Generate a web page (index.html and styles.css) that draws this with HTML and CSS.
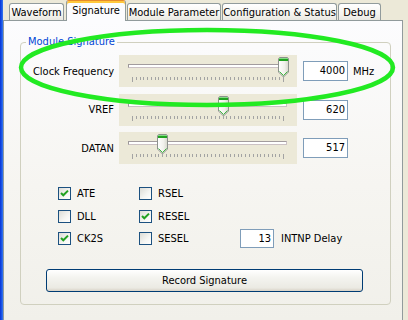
FILE: index.html
```html
<!DOCTYPE html>
<html>
<head>
<meta charset="utf-8">
<link rel="stylesheet" href="styles.css">
</head>
<body>
<svg class="defs" aria-hidden="true">
  <defs>
    <linearGradient id="thumbfill" x1="0" x2="1" y1="0" y2="0">
      <stop offset="0" stop-color="#ffffff"/>
      <stop offset="0.6" stop-color="#f1f1ec"/>
      <stop offset="1" stop-color="#d6d6cc"/>
    </linearGradient>
    <symbol id="thumb" viewBox="0 0 11 21">
      <path d="M1.5,0.5 H9.5 L10.5,1.5 V15 L5.5,20 L0.5,15 V1.5 Z" fill="url(#thumbfill)" stroke="#8c918c"/>
      <rect x="1" y="1" width="9" height="3" fill="#21a221"/>
      <rect x="1" y="1" width="9" height="1" fill="#86dc86"/>
      <path d="M1.5,14.5 L5.5,18.5 L9.5,14.5" fill="none" stroke="#41b841"/>
    </symbol>
    <symbol id="check" viewBox="0 0 11 11">
      <path d="M2,5 L4.3,7.3 L9,2.6" fill="none" stroke="#21a121" stroke-width="2"/>
    </symbol>
  </defs>
</svg>
<div class="window">
  <div class="frame-edge"></div>
  <div class="main">
    <div class="tabs">
      <div class="tab w-wave">Waveform</div>
      <div class="tab tab-active w-sig">Signature</div>
      <div class="tab w-mod">Module Parameter</div>
      <div class="tab w-conf">Configuration &amp; Status</div>
      <div class="tab w-dbg">Debug</div>
    </div>
    <div class="panel">
      <fieldset class="group">
        <legend>Module Signature</legend>
        <div class="sliders">
          <div class="srow">
            <span class="slabel">Clock Frequency</span>
            <div class="trackbar" style="--v:1">
              <div class="channel"></div>
              <div class="ticks"></div>
              <svg class="thumb"><use href="#thumb"/></svg>
            </div>
            <div class="edit">4000</div>
            <span class="unit">MHz</span>
          </div>
          <div class="srow">
            <span class="slabel">VREF</span>
            <div class="trackbar" style="--v:0.6">
              <div class="channel"></div>
              <div class="ticks"></div>
              <svg class="thumb"><use href="#thumb"/></svg>
            </div>
            <div class="edit">620</div>
          </div>
          <div class="srow">
            <span class="slabel">DATAN</span>
            <div class="trackbar" style="--v:0.2">
              <div class="channel"></div>
              <div class="ticks"></div>
              <svg class="thumb"><use href="#thumb"/></svg>
            </div>
            <div class="edit">517</div>
          </div>
        </div>
        <div class="checks">
          <div class="cb c1"><span class="box"><svg class="tick"><use href="#check"/></svg></span>ATE</div>
          <div class="cb c2"><span class="box"></span>RSEL</div>
          <div class="cb c1"><span class="box"></span>DLL</div>
          <div class="cb c2"><span class="box"><svg class="tick"><use href="#check"/></svg></span>RESEL</div>
          <div class="cb c1"><span class="box"><svg class="tick"><use href="#check"/></svg></span>CK2S</div>
          <div class="cb c2"><span class="box"></span>SESEL</div>
          <div class="delay c3"><div class="edit small">13</div>INTNP Delay</div>
        </div>
        <button class="btn">Record Signature</button>
      </fieldset>
    </div>
  </div>
</div>
<svg class="annot" width="408" height="320" viewBox="0 0 408 320">
  <ellipse cx="207" cy="67.5" rx="186" ry="37.5" fill="none" stroke="#22ea22" stroke-width="4.5"/>
</svg>
</body>
</html>
```

FILE: styles.css
```css
html, body {
  margin: 0;
  padding: 0;
}
body {
  background: #ece9d8;
  font-family: "DejaVu Sans Condensed", "Liberation Sans", sans-serif;
  font-size: 11px;
  color: #000;
  width: 408px;
  height: 320px;
  overflow: hidden;
}
.defs {
  position: absolute;
  width: 0;
  height: 0;
  overflow: hidden;
}
.window {
  display: flex;
  width: 408px;
  height: 320px;
  overflow: hidden;
}
.frame-edge {
  flex: none;
  width: 3px;
  background: linear-gradient(to right, #0831d9, #1b5ae6 60%, #3b78ef);
}
.main {
  flex: 1;
  display: flex;
  flex-direction: column;
}
.tabs {
  display: flex;
  align-items: flex-end;
  gap: 1px;
  height: 20px;
  padding-left: 6px;
  flex: none;
}
.tab {
  box-sizing: border-box;
  height: 17px;
  border: 1px solid #919b9c;
  border-bottom: none;
  border-radius: 3px 3px 0 0;
  background: linear-gradient(#ffffff, #f6f5f1 60%, #e9e8e1);
  display: flex;
  align-items: center;
  justify-content: center;
  white-space: nowrap;
}
.tab-active {
  height: 21px;
  margin-bottom: -1px;
  position: relative;
  z-index: 1;
  border-top: 1px solid #e68b2c;
  box-shadow: inset 0 2px 0 #ffc83c;
  background: #fcfcfe;
  padding-bottom: 2px;
}
.w-wave { width: 55px; }
.w-sig { width: 60px; margin-left: 1px; }
.w-mod { width: 94px; }
.w-conf { width: 115px; }
.w-dbg { width: 43px; }
.panel {
  flex: 1;
  box-sizing: border-box;
  width: 400px;
  border: 1px solid #919b9c;
  border-bottom: none;
  background: linear-gradient(#fcfcfe, #f6f5f1 55%, #f1f0ea);
}
.group {
  margin: 14px 0 0 16px;
  padding: 0 0 12px 0;
  width: 371px;
  box-sizing: border-box;
  border: 1px solid #d0d0bf;
  border-radius: 4px;
  min-inline-size: 0;
}
.group legend {
  margin-left: 5px;
  padding: 0 2px;
  line-height: 14px;
  color: #0046d5;
}
.sliders {
  display: flex;
  flex-direction: column;
  gap: 6.5px;
  padding-top: 6px;
}
.srow {
  display: flex;
  align-items: center;
  height: 32px;
}
.slabel {
  width: 93px;
  margin-right: 5px;
  text-align: right;
  white-space: nowrap;
}
.trackbar {
  position: relative;
  flex: none;
  width: 178px;
  height: 32px;
  margin-right: 6px;
  background: #ece9d8;
  overflow: hidden;
}
.channel {
  box-sizing: border-box;
  height: 4px;
  margin: 9px 10px 0 9px;
  border: 1px solid #cbc1c4;
  border-top-color: #a29c9e;
  border-left-color: #9c9899;
  background: #ffffff;
}
.ticks {
  margin: 9px 0 0 13px;
  width: 152px;
  height: 5px;
  background:
    linear-gradient(to right, #a3a3a3 0 1px, transparent 1px calc(100% - 1px), #a3a3a3 calc(100% - 1px)),
    repeating-linear-gradient(to right, #a3a3a3 0 1px, transparent 1px 3.775px) 0 0 / 100% 3px no-repeat;
}
.thumb {
  position: absolute;
  top: 2px;
  left: calc(8px + var(--v) * 151px);
  width: 11px;
  height: 21px;
}
.edit {
  flex: none;
  box-sizing: border-box;
  width: 45px;
  height: 20px;
  border: 1px solid #7f9db9;
  background: #ffffff;
  text-align: right;
  padding-right: 2px;
  line-height: 18px;
  margin-right: 5px;
}
.unit {
  white-space: nowrap;
}
.checks {
  display: grid;
  grid-template-columns: 81px 101px auto;
  grid-template-rows: repeat(3, 13px);
  row-gap: 9.5px;
  margin: 23px 0 0 37px;
}
.c1 { grid-column: 1; }
.c2 { grid-column: 2; }
.c3 { grid-column: 3; }
.cb {
  display: flex;
  align-items: center;
  gap: 6px;
  height: 13px;
  white-space: nowrap;
}
.box {
  flex: none;
  box-sizing: border-box;
  width: 13px;
  height: 13px;
  border: 1px solid #1c5180;
  background: linear-gradient(135deg, #dcdcd6, #f6f6f3 60%, #ffffff);
  display: flex;
}
.tick {
  width: 11px;
  height: 11px;
}
.delay {
  display: flex;
  align-items: center;
  gap: 7px;
  height: 13px;
  white-space: nowrap;
}
.edit.small {
  width: 34px;
  height: 19px;
  line-height: 17px;
  margin-right: 0;
}
.btn {
  display: block;
  margin: 24px 0 0 25px;
  width: 317px;
  height: 23px;
  padding: 0;
  border: 1px solid #003c74;
  border-radius: 3px;
  background: linear-gradient(#ffffff, #f4f4f0 35%, #ebeae3 85%, #d8d2c6);
  font: inherit;
  color: #000;
}
.annot {
  position: absolute;
  left: 0;
  top: 0;
  pointer-events: none;
}
```
